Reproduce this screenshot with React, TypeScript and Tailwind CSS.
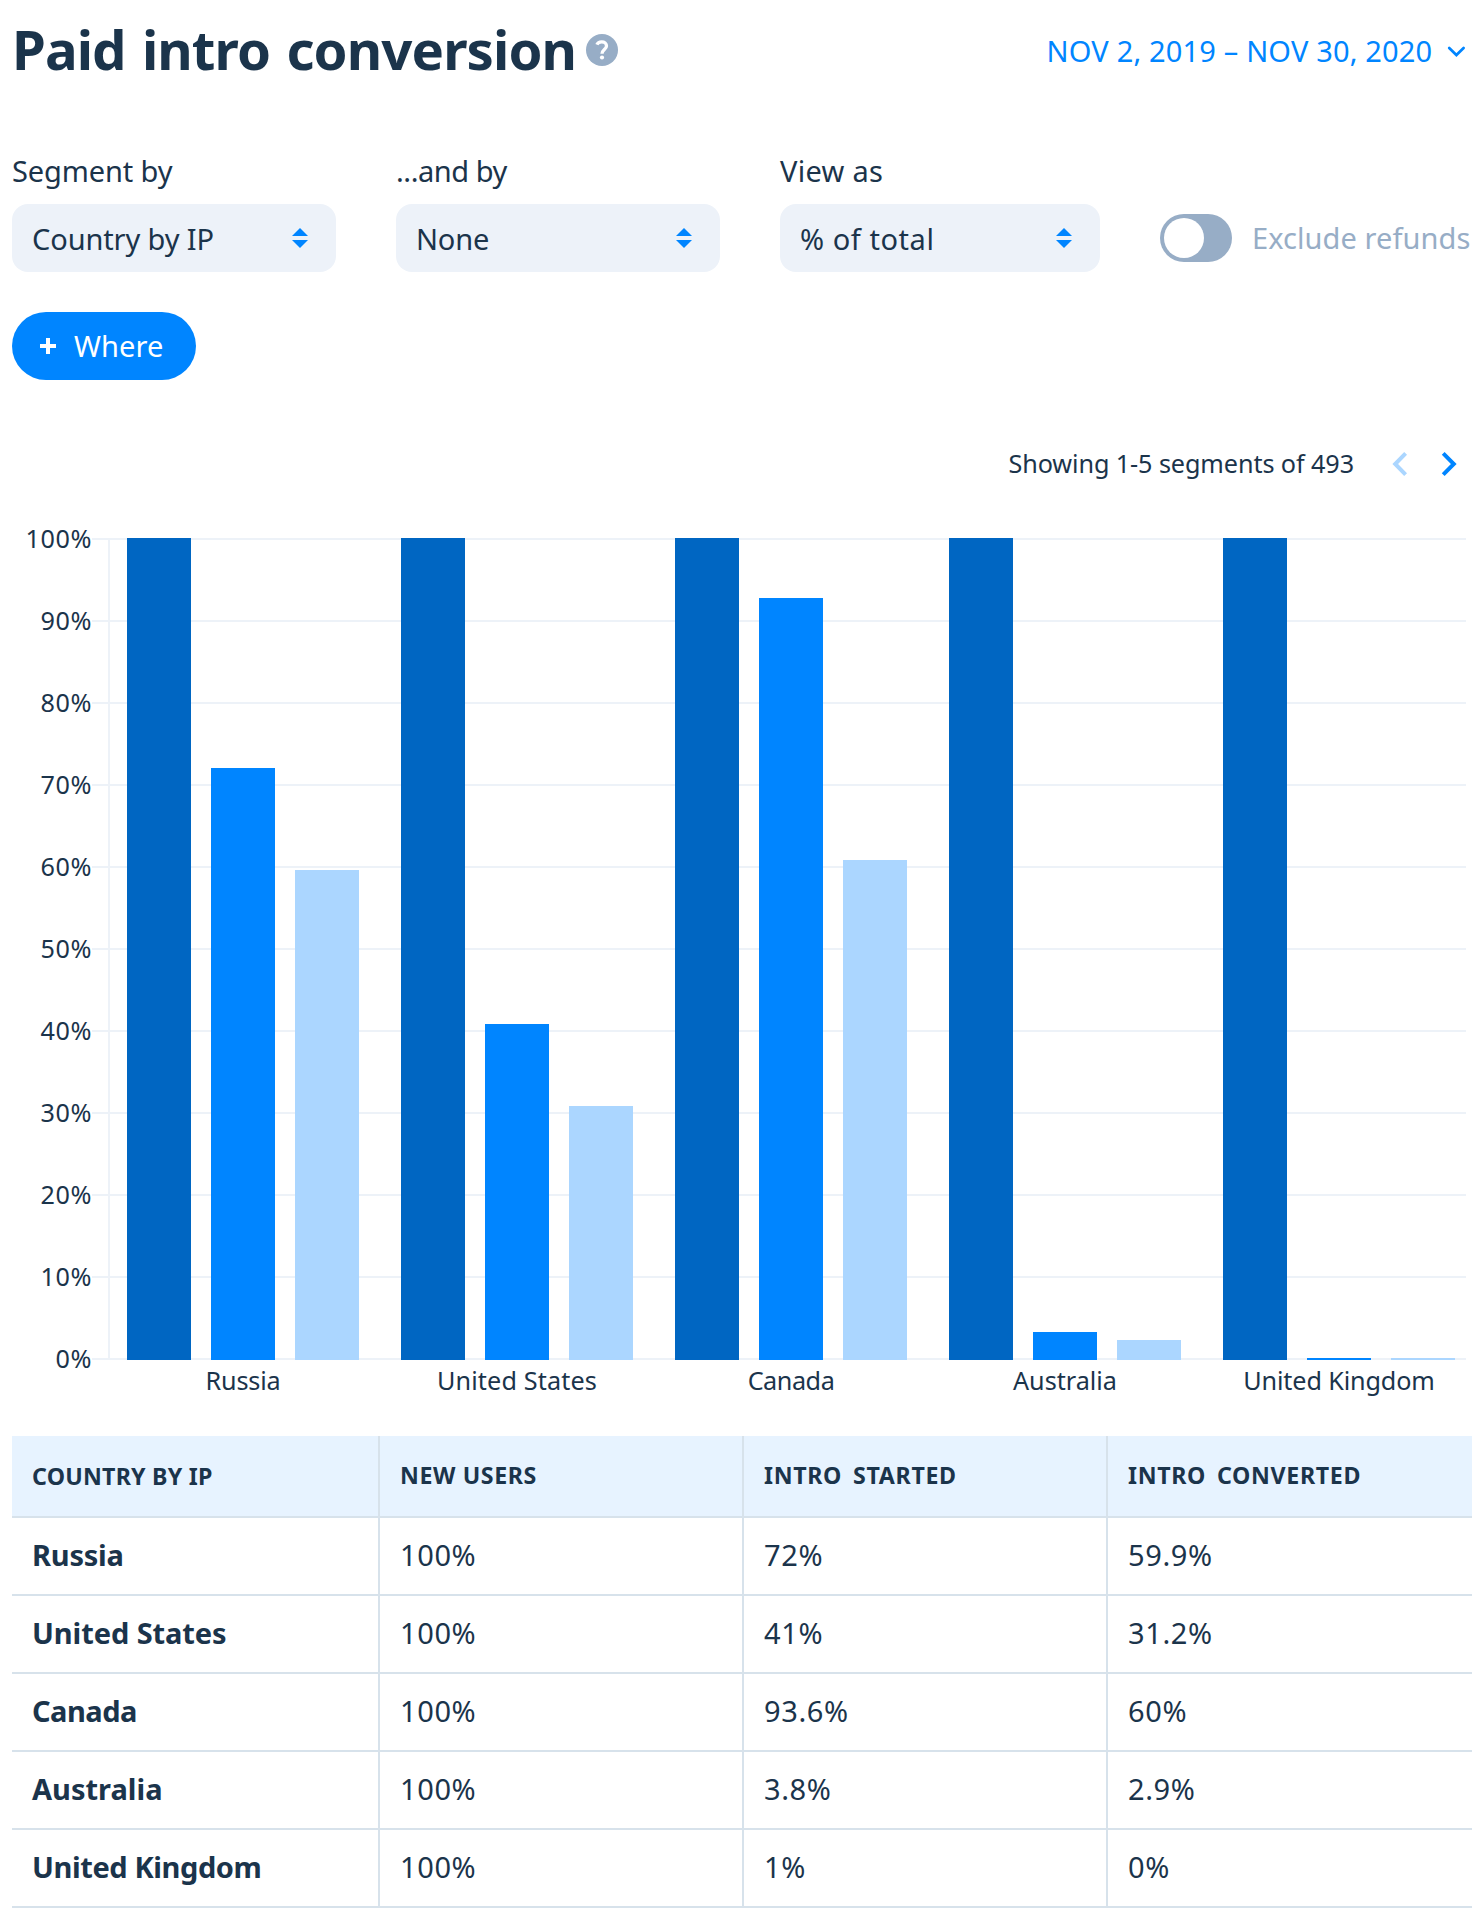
import type { ReactNode } from 'react';

type Segment = {
  name: string;
  labelSpacing: string;
  nameSpacing: string;
  bars: [number, number, number];
  values: [string, string, string];
};

const segments: Segment[] = [
  {
    name: 'Russia',
    labelSpacing: 'tracking-[-0.17px]',
    nameSpacing: 'tracking-[-0.23px]',
    bars: [822, 592, 490],
    values: ['100%', '72%', '59.9%'],
  },
  {
    name: 'United States',
    labelSpacing: 'tracking-[0.15px]',
    nameSpacing: 'tracking-[-0.08px]',
    bars: [822, 336, 254],
    values: ['100%', '41%', '31.2%'],
  },
  {
    name: 'Canada',
    labelSpacing: 'tracking-[-0.45px]',
    nameSpacing: 'tracking-[-0.5px]',
    bars: [822, 762, 500],
    values: ['100%', '93.6%', '60%'],
  },
  {
    name: 'Australia',
    labelSpacing: 'tracking-[0px]',
    nameSpacing: 'tracking-[0px]',
    bars: [822, 28, 20],
    values: ['100%', '3.8%', '2.9%'],
  },
  {
    name: 'United Kingdom',
    labelSpacing: 'tracking-[-0.12px]',
    nameSpacing: 'tracking-[-0.4px]',
    bars: [822, 2, 2],
    values: ['100%', '1%', '0%'],
  },
];

const ticks = ['100%', '90%', '80%', '70%', '60%', '50%', '40%', '30%', '20%', '10%', '0%'];
const barColors = ['#0066c2', '#0085ff', '#abd6ff'];

function HelpIcon() {
  return (
    <svg className="mt-[2px] ml-3 size-8 shrink-0" viewBox="0 0 32 32" fill="none">
      <circle cx="16" cy="16" r="16" fill="#97adc6" />
      <path
        d="M10.9 10.6C11.7 8.6 13.5 7.8 15.7 7.8c2.8 0 4.8 1.6 4.8 4.1 0 3.5-4.5 3.9-4.5 7.9"
        stroke="#fff"
        strokeWidth="3.3"
      />
      <circle cx="16" cy="23.5" r="2.1" fill="#fff" />
    </svg>
  );
}

function Select({ value, width, spacing }: { value: string; width: string; spacing: string }) {
  return (
    <button
      type="button"
      className={`flex h-[68px] items-center justify-between rounded-2xl bg-[#edf2f9] pr-7 pl-5 ${width}`}
    >
      <span className={`pt-[2px] leading-[34px] whitespace-nowrap ${spacing}`}>{value}</span>
      <svg className="h-5 w-4" viewBox="0 0 16 20" fill="#0085ff">
        <path d="M8 0l8 8H0zM8 20l8-8H0z" />
      </svg>
    </button>
  );
}

function Field({ label, spacing, children }: { label: string; spacing: string; children: ReactNode }) {
  return (
    <div className="flex flex-col gap-4">
      <span className={`leading-[34px] ${spacing}`}>{label}</span>
      {children}
    </div>
  );
}

function Chart() {
  return (
    <section className="mt-[41px] flex items-start text-[25.2px] leading-[34px]">
      <div className="flex h-[854px] w-20 flex-col justify-between text-right tracking-[0.6px]">
        {ticks.map((tick) => (
          <span key={tick}>{tick}</span>
        ))}
      </div>
      <div className="pt-[17px]">
        <svg className="block h-[822px] w-[1374px]" viewBox="0 0 1374 822" shapeRendering="crispEdges">
          {ticks.map((tick, i) => (
            <rect key={tick} x="0" y={i * 82} width="1374" height="2" fill="#edf2f8" />
          ))}
          <rect x="16" y="0" width="2" height="822" fill="#edf2f8" />
          {segments.map((segment, i) =>
            segment.bars.map((height, j) => (
              <rect
                key={`${segment.name}-${j}`}
                x={35 + i * 274 + j * 84}
                y={822 - height}
                width="64"
                height={height}
                fill={barColors[j]}
              />
            )),
          )}
        </svg>
        <div className="mt-[3px] ml-[14px] grid w-[1370px] grid-cols-5 text-center">
          {segments.map((segment) => (
            <span key={segment.name} className={segment.labelSpacing}>
              {segment.name}
            </span>
          ))}
        </div>
      </div>
    </section>
  );
}

function DataTable() {
  const columns = 'grid grid-cols-[368px_364px_364px_364px] border-b-2 border-[#d7e2eb]';
  const cell = 'flex items-center border-r-2 border-[#d7e2eb] pl-5 pb-[2px] last:border-r-0';
  return (
    <section className="mt-[39px] w-[1460px]">
      <div className={`${columns} h-[82px] bg-[#e7f3ff] text-[23.2px] leading-8 font-bold whitespace-pre`}>
        <div className="flex items-center border-r-2 border-[#d7e2eb] pl-5 tracking-[0.23px]">COUNTRY BY IP</div>
        <div className={`${cell} tracking-[0.6px]`}>NEW USERS</div>
        <div className={`${cell} tracking-[0.65px] [word-spacing:-1.2px]`}>{'INTRO  STARTED'}</div>
        <div className={`${cell} tracking-[0.65px] [word-spacing:-1.2px]`}>{'INTRO  CONVERTED'}</div>
      </div>
      {segments.map((segment) => (
        <div key={segment.name} className={`${columns} h-[78px]`}>
          <div className={`${cell} font-bold ${segment.nameSpacing}`}>{segment.name}</div>
          {segment.values.map((value, i) => (
            <div key={i} className={`${cell} tracking-[0.6px]`}>
              {value}
            </div>
          ))}
        </div>
      ))}
    </section>
  );
}

export default function App() {
  return (
    <main className="h-[1920px] w-[1484px] overflow-hidden bg-white pt-[17px] pl-3 font-['Noto_Sans',sans-serif] text-[29px] leading-[40px] text-[#1b344b]">
      <header className="flex h-16 items-center pr-[18px]">
        <h1 className="w-[562px] text-[54.5px] leading-[64px] font-bold tracking-[-0.9px] whitespace-nowrap [word-spacing:3px]">
          Paid intro conversion
        </h1>
        <HelpIcon />
        <button type="button" className="ml-auto flex items-center gap-[14px] pt-[3px] text-[#0085ff]">
          <span className="w-[387px] tracking-[0.17px] whitespace-nowrap">NOV 2, 2019 – NOV 30, 2020</span>
          <svg className="mt-[2px] h-3 w-[19px]" viewBox="0 0 19 12" fill="none">
            <path d="M2.2 2l7.2 7 7.2-7" stroke="#0085ff" strokeWidth="2.7" strokeLinecap="round" />
          </svg>
        </button>
      </header>

      <section className="mt-[73px] flex items-end gap-[60px]">
        <Field label="Segment by" spacing="tracking-[-0.12px]">
          <Select value="Country by IP" width="w-[324px]" spacing="tracking-[-0.12px]" />
        </Field>
        <Field label="...and by" spacing="tracking-[-0.45px]">
          <Select value="None" width="w-[324px]" spacing="tracking-[-0.17px]" />
        </Field>
        <Field label="View as" spacing="tracking-[0.29px]">
          <Select value="% of total" width="w-[320px]" spacing="tracking-[0.55px]" />
        </Field>
        <div className="flex h-[68px] items-center gap-5">
          <span className="flex h-12 w-[72px] shrink-0 items-center rounded-full bg-[#97adc6] pl-1">
            <span className="size-10 rounded-full bg-white" />
          </span>
          <span className="leading-[34px] tracking-[0.08px] whitespace-nowrap text-[#97adc6]">Exclude refunds</span>
        </div>
      </section>

      <button
        type="button"
        className="mt-10 flex h-[68px] w-[184px] items-center gap-[18px] rounded-full bg-[#0085ff] pl-7 text-white"
      >
        <svg className="size-4" viewBox="0 0 16 16" fill="#fff" shapeRendering="crispEdges">
          <path d="M6 0h4v6h6v4h-6v6H6v-6H0V6h6z" />
        </svg>
        <span className="tracking-[0.09px]">Where</span>
      </button>

      <nav className="mt-[66px] flex h-[34px] items-center justify-end pr-[26px] text-[25.2px] leading-[34px]">
        <span className="tracking-[-0.09px]">Showing 1-5 segments of 493</span>
        <svg className="mt-[2px] ml-[37px] h-7 w-[18px]" viewBox="0 0 18 28" fill="none">
          <path d="M14.6 3.4L4.2 14l10.4 10.6" stroke="#abd6ff" strokeWidth="4" />
        </svg>
        <svg className="mt-[2px] ml-[31px] h-7 w-[18px]" viewBox="0 0 18 28" fill="none">
          <path d="M3.2 3.4L13.8 14 3.2 24.6" stroke="#0085ff" strokeWidth="4" />
        </svg>
      </nav>

      <Chart />
      <DataTable />
    </main>
  );
}
